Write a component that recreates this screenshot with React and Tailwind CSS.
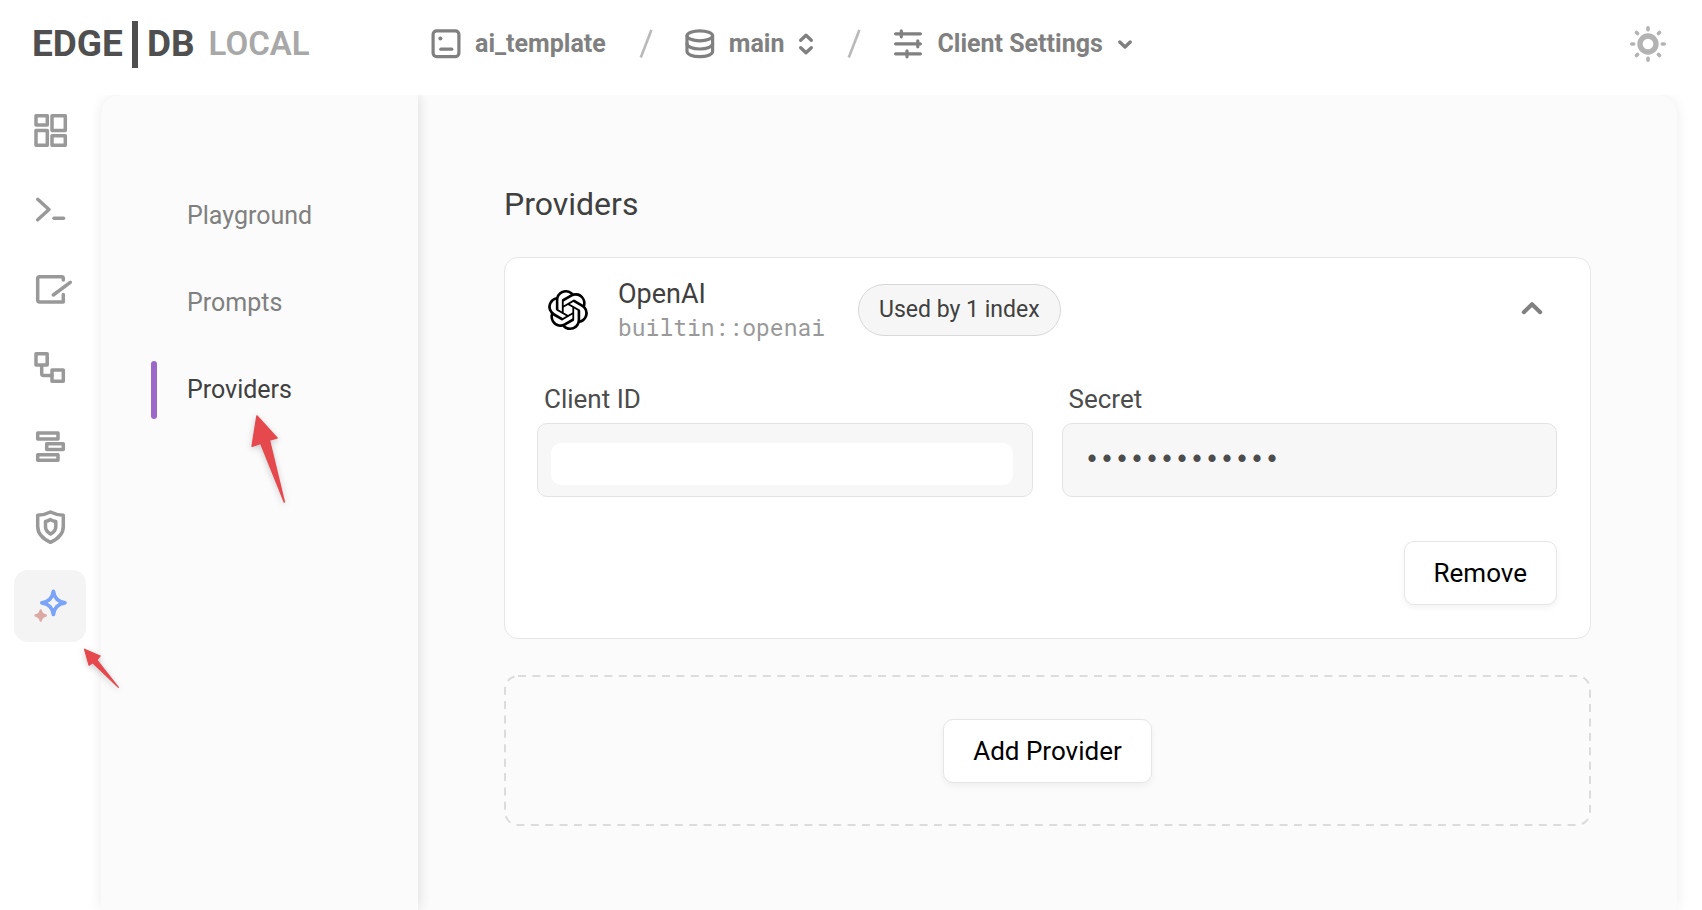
import { SiOpenai } from "react-icons/si";

const railIcons = [
  {
    label: "Dashboard",
    art: (
      <>
        <rect x="22" y="19.7" width="11.3" height="9.3" />
        <rect x="38" y="19.7" width="13.3" height="14.9" />
        <rect x="22" y="34.4" width="11.3" height="14.9" />
        <rect x="38" y="39.7" width="13.3" height="9.6" />
      </>
    ),
  },
  {
    label: "REPL",
    art: (
      <>
        <path d="M23.7 24.3L35 34.5L23.7 44.8" />
        <path d="M40 43.3H49.5" />
      </>
    ),
  },
  {
    label: "Editor",
    art: (
      <>
        <path d="M49.3 26V24.4Q49.3 22.7 47.6 22.7H25.6Q23.7 22.7 23.7 24.6V46.1Q23.7 48 25.6 48H49.3V40.6" />
        <path d="M39.3 41L56.3 28.3" />
      </>
    ),
  },
  {
    label: "Schema",
    art: (
      <>
        <rect x="22" y="20.7" width="11.2" height="11.2" />
        <rect x="38" y="37" width="11.3" height="11.3" />
        <path d="M27.7 33V40.5Q27.7 42.6 29.8 42.6H38" />
      </>
    ),
  },
  {
    label: "Data",
    art: (
      <>
        <rect x="23.7" y="21" width="20.3" height="5.9" />
        <rect x="32.7" y="31.8" width="16.6" height="5.7" />
        <rect x="23.7" y="42.7" width="20.3" height="5.6" />
      </>
    ),
  },
  {
    label: "Auth",
    art: (
      <>
        <path d="M36.5 21Q31 23.8 23.7 24.3V35.5Q23.7 45.5 36.5 51.3Q49.3 45.5 49.3 35.5V24.3Q42 23.8 36.5 21Z" />
        <path d="M36.6 28.6Q34 30.2 31.5 30.5V36Q31.5 40 36.6 43Q41.8 40 41.8 36V30.5Q39 30.2 36.6 28.6Z" />
      </>
    ),
  },
  {
    label: "AI",
    active: true,
    art: (
      <>
        <path
          stroke="#7ba4f8"
          strokeWidth="3.7"
          d="M39.4 21.3Q40.6 31.4 51 32.8Q40.6 34.2 39.4 44.5Q38.2 34.2 27.8 32.8Q38.2 31.4 39.4 21.3Z"
        />
        <path fill="#f4f4f4" stroke="none" d="M39.4 27.6Q40.8 31.4 44.6 32.8Q40.8 34.2 39.4 38Q38 34.2 34.2 32.8Q38 31.4 39.4 27.6Z" />
        <path
          stroke="#dcaaa5"
          fill="#dcaaa5"
          strokeWidth="2.4"
          d="M26.7 40.4Q27.5 44.6 31.8 45.5Q27.5 46.4 26.7 50.6Q25.9 46.4 21.6 45.5Q25.9 44.6 26.7 40.4Z"
        />
      </>
    ),
  },
];

const pages = [
  { name: "Playground" },
  { name: "Prompts" },
  { name: "Providers", active: true },
];

function Slash() {
  return (
    <svg className="mr-8 ml-[33px] h-[30px] w-[14px]" viewBox="0 0 14 30" aria-hidden="true">
      <path d="M1.8 28.5L12.4 1" stroke="#b9b9b9" strokeWidth="2.6" fill="none" />
    </svg>
  );
}

function CrumbIcon({ children }) {
  return (
    <svg
      className="h-[30px] w-[30px]"
      viewBox="0 0 30 30"
      fill="none"
      stroke="#808080"
      strokeWidth="3.2"
      strokeLinecap="round"
      strokeLinejoin="round"
      aria-hidden="true"
    >
      {children}
    </svg>
  );
}

function Header() {
  return (
    <header className="relative z-20 flex h-[95px] shrink-0 items-center bg-white pr-[34px] pb-[7px] pl-8">
      <a
        href="#home"
        aria-label="EdgeDB local"
        className="flex w-[399px] shrink-0 items-center text-[37px] leading-[48px] font-bold text-[#4f4f4f]"
      >
        <span>EDGE</span>
        <span className="mx-[9px] h-[47px] w-[6px] bg-[#4f4f4f]" />
        <span>DB</span>
        <span className="ml-[14px] text-[33px] font-semibold text-[#a8a8a8]">LOCAL</span>
      </a>
      <nav aria-label="Breadcrumb" className="flex items-center text-[25px] leading-8 font-bold text-[#808080]">
        <a href="#instance" className="flex items-center gap-[14px]">
          <CrumbIcon>
            <rect x="2.1" y="1.8" width="25.8" height="25.8" rx="3.5" />
            <circle cx="9.4" cy="9.4" r="2" fill="#808080" stroke="none" />
            <path d="M9.8 20.2H20.8" />
          </CrumbIcon>
          ai_template
        </a>
        <Slash />
        <button type="button" className="flex items-center gap-[14px]">
          <CrumbIcon>
            <ellipse cx="14.8" cy="6.8" rx="12.8" ry="5" />
            <path d="M2 6.8V22.6C2 25.4 7.7 27.7 14.8 27.7S27.6 25.4 27.6 22.6V6.8" />
            <path d="M2 14.6C2 17.8 7.7 20 14.8 20S27.6 17.8 27.6 14.6" />
          </CrumbIcon>
          main
          <svg className="h-6 w-4" viewBox="0 0 16 24" fill="none" stroke="#808080" strokeWidth="3.4" strokeLinecap="round" strokeLinejoin="round" aria-hidden="true">
            <path d="M2.7 8.3L8 3.3L13.3 8.3M2.7 15.7L8 20.7L13.3 15.7" />
          </svg>
        </button>
        <Slash />
        <button type="button" className="flex items-center gap-[14px]">
          <CrumbIcon>
            <path d="M2.6 4.8H27.4M2.6 14.8H27.4M2.6 24.8H27.4" />
            <path d="M8.3 1.8V7.8M24.8 11.8V17.8M14 21.8V27.8" />
          </CrumbIcon>
          Client Settings
          <svg className="h-4 w-4" viewBox="0 0 16 16" fill="none" stroke="#808080" strokeWidth="3.4" strokeLinecap="round" strokeLinejoin="round" aria-hidden="true">
            <path d="M2.8 6L8 11L13.2 6" />
          </svg>
        </button>
      </nav>
      <button type="button" aria-label="Toggle theme" className="ml-auto">
        <svg className="h-10 w-10" viewBox="-20 -20 40 40" fill="none" stroke="#b3b3b3" strokeLinecap="round" aria-hidden="true">
          <circle r="8" strokeWidth="5.4" />
          <path
            strokeWidth="3.6"
            d="M0 -16.2V-14.3M0 14.3V16.2M-16.2 0H-14.3M14.3 0H16.2M-11.5 -11.5L-10.4 -10.4M10.4 10.4L11.5 11.5M-11.5 11.5L-10.4 10.4M10.4 -10.4L11.5 -11.5"
          />
        </svg>
      </button>
    </header>
  );
}

function Rail() {
  return (
    <nav aria-label="Sections" className="flex w-[101px] shrink-0 flex-col gap-[7px] pt-px pl-[14px]">
      {railIcons.map((item) => (
        <a
          key={item.label}
          href={"#" + item.label.toLowerCase()}
          aria-label={item.label}
          aria-current={item.active ? "page" : undefined}
          className={"block h-[72px] w-[72px] rounded-[14px] " + (item.active ? "bg-[#f4f4f4]" : "")}
        >
          <svg
            className="h-[72px] w-[72px]"
            viewBox="0 0 72 72"
            fill="none"
            stroke="#999999"
            strokeWidth="3.5"
            strokeLinecap="round"
            strokeLinejoin="round"
            aria-hidden="true"
          >
            {item.art}
          </svg>
        </a>
      ))}
    </nav>
  );
}

function Pages() {
  return (
    <aside className="relative z-10 w-[317px] shrink-0 bg-[#fbfbfb] pt-[92px] pl-[50px] shadow-[0_0_12px_rgba(0,0,0,0.14)]">
      <nav aria-label="AI pages" className="flex flex-col gap-[29px]">
        {pages.map((page) => (
          <a
            key={page.name}
            href={"#" + page.name.toLowerCase()}
            aria-current={page.active ? "page" : undefined}
            className={
              "flex h-[58px] items-center gap-[30px] text-[25px] leading-8 " +
              (page.active ? "text-[#404040]" : "text-[#808080]")
            }
          >
            <span className={"h-full w-[6px] rounded-[3px] " + (page.active ? "bg-[#9b68c9]" : "")} />
            {page.name}
          </a>
        ))}
      </nav>
    </aside>
  );
}

const buttonClass =
  "h-16 rounded-[10px] border border-[#e6e6e6] bg-white px-[29px] text-[26px] leading-8 text-black shadow-[0_3px_6px_rgba(0,0,0,0.05)]";

function ProviderCard() {
  return (
    <section className="mt-[33px] rounded-[14px] border border-[#e6e6e6] bg-white">
      <div className="flex h-[104px] items-center pr-[38px] pl-[43px]">
        <SiOpenai className="h-10 w-10 text-black" aria-hidden="true" />
        <div className="ml-[30px]">
          <h2 className="text-[27px] leading-[34px] text-[#404040]">OpenAI</h2>
          <p className="font-['Roboto_Mono','Liberation_Mono',monospace] text-[23px] leading-8 text-[#999999]">
            builtin::openai
          </p>
        </div>
        <span className="ml-[33px] flex h-[52px] items-center rounded-full border border-[#d8d8d8] bg-[#f6f6f6] px-5 text-[23px] leading-8 text-[#404040]">
          Used by 1 index
        </span>
        <button type="button" aria-label="Collapse OpenAI" className="ml-auto flex h-10 w-10 items-center justify-center">
          <svg className="h-10 w-10" viewBox="0 0 40 40" fill="none" stroke="#808080" strokeWidth="4" strokeLinecap="round" strokeLinejoin="round" aria-hidden="true">
            <path d="M11.8 22.2L20 14.2L28.2 22.2" />
          </svg>
        </button>
      </div>
      <div className="grid grid-cols-2 gap-x-[29px] pt-[21px] pr-[33px] pl-8">
        <div className="flex flex-col gap-2">
          <label htmlFor="client-id" className="pl-[7px] text-[26px] leading-8 text-[#4c4c4c]">
            Client ID
          </label>
          <div className="relative">
            <input
              id="client-id"
              type="text"
              readOnly
              className="block h-[74px] w-full rounded-[10px] border border-[#e3e3e3] bg-[#f7f7f7] px-[22px] outline-none"
            />
            <span className="absolute top-5 right-5 bottom-3 left-[14px] rounded-[10px] bg-white" />
          </div>
        </div>
        <div className="flex flex-col gap-2">
          <label htmlFor="secret" className="pl-[7px] text-[26px] leading-8 text-[#4c4c4c]">
            Secret
          </label>
          <input
            id="secret"
            type="password"
            readOnly
            defaultValue="0000000000000"
            className="block h-[74px] w-full rounded-[10px] border border-[#e3e3e3] bg-[#f7f7f7] px-[22px] font-['Liberation_Mono',monospace] text-[25px] font-bold text-[#4c4c4c] outline-none"
          />
        </div>
      </div>
      <div className="flex justify-end pt-11 pr-[33px] pb-[33px] pl-8">
        <button type="button" className={buttonClass}>
          Remove
        </button>
      </div>
    </section>
  );
}

function AddProvider() {
  return (
    <div className="relative mt-9 flex h-[151px] items-center justify-center">
      <svg className="absolute inset-0 h-full w-full p-px" overflow="visible" aria-hidden="true">
        <rect width="100%" height="100%" rx="13" fill="none" stroke="#dcdcdc" strokeWidth="2" strokeDasharray="8 6.4" />
      </svg>
      <button type="button" className={buttonClass + " relative"}>
        Add Provider
      </button>
    </div>
  );
}

function Pointers() {
  return (
    <>
      <svg className="pointer-events-none absolute top-[410px] left-[245px] z-30 h-[100px] w-[50px] drop-shadow-[0_2px_3px_rgba(0,0,0,0.2)]" viewBox="245 410 50 100" aria-hidden="true">
        <path
          d="M257 416L277 438L269.3 440L284.3 502L260.7 443.3L252.2 446.2Z"
          fill="#e5484d"
          stroke="#e5484d"
          strokeWidth="1.6"
          strokeLinejoin="round"
        />
      </svg>
      <svg className="pointer-events-none absolute top-[643px] left-[79px] z-30 h-[50px] w-[45px] drop-shadow-[0_2px_3px_rgba(0,0,0,0.2)]" viewBox="79 643 45 50" aria-hidden="true">
        <path
          d="M84.5 649.2L100.2 656L97 660L118.4 687.4L92.7 662.7L89 665.2Z"
          fill="#e5484d"
          stroke="#e5484d"
          strokeWidth="1.2"
          strokeLinejoin="round"
        />
      </svg>
    </>
  );
}

export default function App() {
  return (
    <div className="relative flex min-h-screen flex-col bg-white font-['Roboto',sans-serif]">
      <Header />
      <div className="flex flex-1 pr-[25px]">
        <Rail />
        <div className="flex flex-1 overflow-hidden rounded-t-[20px] bg-[#fbfbfb] shadow-[0_0_14px_rgba(0,0,0,0.08)]">
          <Pages />
          <main className="flex-1 px-[86px] pt-[89px] pb-10">
            <h1 className="text-[32px] leading-10 text-[#404040]">Providers</h1>
            <ProviderCard />
            <AddProvider />
          </main>
        </div>
      </div>
      <Pointers />
    </div>
  );
}
